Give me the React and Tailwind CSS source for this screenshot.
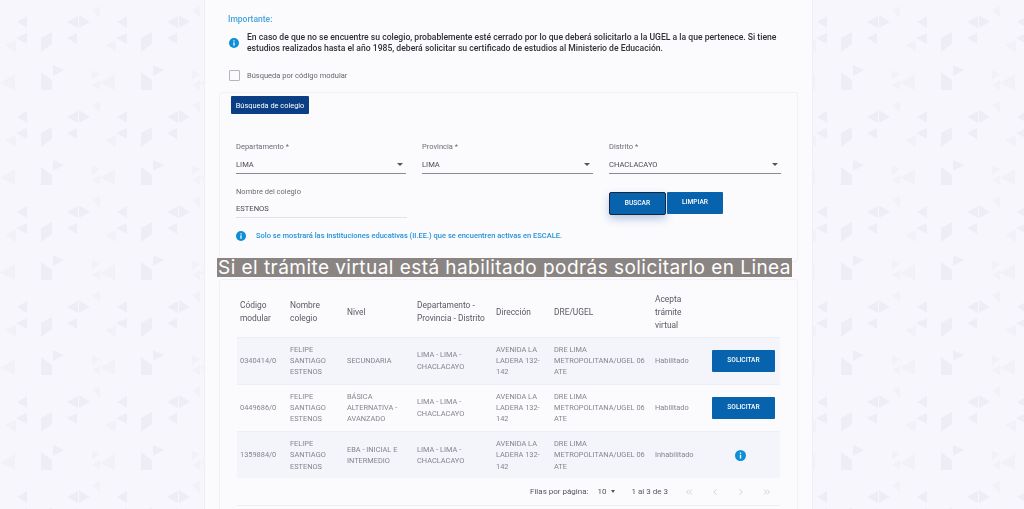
import { ChevronLeft, ChevronRight, ChevronsLeft, ChevronsRight } from "lucide-react";

const rows = [
  {
    codigo: "0340414/0",
    nivel: ["SECUNDARIA"],
    estado: "Habilitado",
    shaded: true,
  },
  {
    codigo: "0449686/0",
    nivel: ["BÁSICA", "ALTERNATIVA -", "AVANZADO"],
    estado: "Habilitado",
    shaded: false,
  },
  {
    codigo: "1359884/0",
    nivel: ["EBA - INICIAL E", "INTERMEDIO"],
    estado: "Inhabilitado",
    shaded: true,
  },
];

function Lines({ items }) {
  return items.map((t) => (
    <span key={t} className="block whitespace-nowrap">
      {t}
    </span>
  ));
}

function InfoDot({ className }) {
  return (
    <svg viewBox="0 0 24 24" className={className}>
      <circle cx="12" cy="12" r="12" fill="#0d8fd8" />
      <rect x="10.5" y="10.5" width="3" height="8" fill="#fff" />
      <rect x="10.5" y="5.5" width="3" height="3" fill="#fff" />
    </svg>
  );
}

function Pattern() {
  return (
    <svg className="absolute inset-0 w-full h-full blur-[0.6px]" aria-hidden="true">
      <defs>
        <pattern id="tri" width="100" height="95" patternUnits="userSpaceOnUse">
          <g fill="#eeedf5">
            <path d="M17 22 27 16V28Z" />
            <path d="M67 22 78 16V28Z" />
            <path d="M79 15 90 22 79 28Z" />
            <path d="M16 38 27 33V44Z" />
            <path d="M41 38 52 32V44L41 52Z" />
            <path d="M67 38 77 33V44Z" />
            <path d="M41 72 52 80V90L41 90Z" />
            <path d="M53 65 64 70 53 76Z" />
          </g>
          <g fill="#f1f1f8">
            <path d="M0 83 15 74V90Z" />
            <path d="M92 85 100 80V90Z" />
            <path d="M92 10 100 6V18Z" />
            <path d="M5 45 16 40V52Z" />
            <path d="M92 70 100 74 92 80Z" />
          </g>
        </pattern>
      </defs>
      <rect width="100%" height="100%" fill="url(#tri)" />
    </svg>
  );
}

function SelectField({ label, value, className }) {
  return (
    <div className={className}>
      <p className="text-[7.5px] leading-[10px] text-[#6b6b74]">{label}</p>
      <div className="mt-[5px] h-[17px] pb-[1px] flex items-center justify-between border-b border-[#8a8a92] text-[7.6px] text-[#4b4b55] pr-[3px]">
        <span>{value}</span>
        <span className="w-0 h-0 border-x-[3.5px] border-x-transparent border-t-[3.5px] border-t-[#55555f]" />
      </div>
    </div>
  );
}

export default function App() {
  return (
    <div
      className="relative h-[509px] w-[1024px] overflow-hidden bg-[#f6f6fc] text-[#45454f]"
      style={{ fontFamily: "Roboto, sans-serif" }}
    >
      <Pattern />

      <div className="relative ml-[204px] w-[609px] h-[509px] overflow-hidden bg-[#fbfbfe] border-x border-[#efeff5] pt-[14px] blur-[0.4px]">
        {/* aviso */}
        <div className="pl-[24px]">
          <p className="-ml-px text-[8.5px] leading-[11px] font-medium text-[#45a5dc]">Importante:</p>
          <div className="mt-[7px] flex items-center">
            <InfoDot className="w-[10px] h-[10px] shrink-0" />
            <p className="ml-[8px] w-[540px] text-[8.6px] leading-[11px] font-medium text-[#2f2f38]">
              En caso de que no se encuentre su colegio, probablemente esté cerrado por lo que deberá solicitarlo a la UGEL a la que pertenece. Si tiene estudios realizados hasta el año 1985, deberá solicitar su certificado de estudios al Ministerio de Educación.
            </p>
          </div>
          <div className="mt-[16px] flex items-center">
            <span className="w-[11px] h-[11px] border border-[#b5b5bd] rounded-[1px]" />
            <span className="ml-[7px] text-[7.5px] text-[#65656e]">Búsqueda por código modular</span>
          </div>
        </div>

        {/* busqueda */}
        <div className="mt-[11px] ml-[14px] w-[579px] h-[170px] border border-[#f0f0f6] rounded-[3px] px-[16px]">
          <div className="-ml-[5px] mt-[3px] w-[78px] h-[18px] bg-[#0a3f86] rounded-[1px] flex items-center justify-center text-[7.4px] text-white">
            Búsqueda de colegio
          </div>
          <div className="mt-[28px] flex gap-[16px]">
            <SelectField label="Departamento *" value="LIMA" className="w-[170px]" />
            <SelectField label="Provincia *" value="LIMA" className="w-[171px]" />
            <SelectField label="Distrito *" value="CHACLACAYO" className="w-[172px]" />
          </div>
          <div className="mt-[13px] flex items-start">
            <div className="w-[171px]">
              <p className="text-[7.5px] leading-[10px] text-[#6b6b74]">Nombre del colegio</p>
              <div className="mt-[6px] h-[15px] border-b border-[#e2e2ea] text-[7.6px] leading-[12px] text-[#4b4b55]">
                ESTENOS
              </div>
            </div>
            <div className="ml-[202px] mt-[5px] flex">
              <button className="w-[57px] h-[23px] bg-[#0763ad] border border-[#17273a] rounded-[2px] text-[6.6px] font-medium text-white shadow-[0_4px_8px_rgba(30,80,170,0.3)]">
                BUSCAR
              </button>
              <button className="ml-[1px] w-[56px] h-[22px] bg-[#0763ad] rounded-[1px] text-[6.6px] font-medium text-white">
                LIMPIAR
              </button>
            </div>
          </div>
          <div className="mt-[12px] flex items-center">
            <InfoDot className="w-[10px] h-[10px]" />
            <span className="ml-[10px] text-[7.5px] font-medium text-[#2493d8]">
              Solo se mostrará las instituciones educativas (II.EE.) que se encuentren activas en ESCALE.
            </span>
          </div>
        </div>

        {/* resultados */}
        <div className="mt-[17px] ml-[14px] w-[579px] h-[260px] border border-[#f0f0f6] rounded-[3px] px-[17px] pt-[7px]">
          <table className="w-[543px] table-fixed border-collapse text-left">
            <colgroup>
              <col className="w-[50px]" />
              <col className="w-[57px]" />
              <col className="w-[70px]" />
              <col className="w-[79px]" />
              <col className="w-[58px]" />
              <col className="w-[101px]" />
              <col className="w-[53px]" />
              <col className="w-[75px]" />
            </colgroup>
            <thead>
              <tr className="h-[50px] text-[8.4px] leading-[13px] text-[#5a5a64]">
                <th className="pl-[3px] font-normal">Código<br />modular</th>
                <th className="pl-[3px] font-normal">Nombre<br />colegio</th>
                <th className="pl-[3px] font-normal">Nivel</th>
                <th className="pl-[3px] font-normal whitespace-nowrap">Departamento -<br />Provincia - Distrito</th>
                <th className="pl-[3px] font-normal">Dirección</th>
                <th className="pl-[3px] font-normal">DRE/UGEL</th>
                <th className="pl-[3px] font-normal">Acepta<br />trámite<br />virtual</th>
                <th />
              </tr>
            </thead>
            <tbody>
              {rows.map((r) => (
                <tr
                  key={r.codigo}
                  className={`h-[47px] text-[7.4px] leading-[11.4px] text-[#85858f] border-t border-[#eeeef4] ${r.shaded ? "bg-[#f4f5fa]" : ""}`}
                >
                  <td className="pl-[3px]">{r.codigo}</td>
                  <td className="pl-[3px]"><Lines items={["FELIPE", "SANTIAGO", "ESTENOS"]} /></td>
                  <td className="pl-[3px]"><Lines items={r.nivel} /></td>
                  <td className="pl-[3px]"><Lines items={["LIMA - LIMA -", "CHACLACAYO"]} /></td>
                  <td className="pl-[3px]"><Lines items={["AVENIDA LA", "LADERA 132-", "142"]} /></td>
                  <td className="pl-[3px]"><Lines items={["DRE LIMA", "METROPOLITANA/UGEL 06", "ATE"]} /></td>
                  <td className="pl-[3px]">{r.estado}</td>
                  <td className="text-center">
                    {r.estado === "Habilitado" ? (
                      <button className="ml-[7px] block w-[63px] h-[22px] bg-[#0763ad] rounded-[1px] text-[6.6px] font-medium text-white">
                        SOLICITAR
                      </button>
                    ) : (
                      <InfoDot className="inline-block w-[11px] h-[11px] -ml-[4px]" />
                    )}
                  </td>
                </tr>
              ))}
            </tbody>
          </table>

          <div className="w-[543px] h-[27px] flex items-center text-[8px] text-[#55555f] pl-[293px] whitespace-nowrap">
            <span>Filas por página:</span>
            <span className="ml-[9px]">10</span>
            <span className="ml-[4px] w-0 h-0 border-x-[2.5px] border-x-transparent border-t-[3px] border-t-[#55555f]" />
            <span className="ml-[17px]">1 al 3 de 3</span>
            <div className="ml-[16px] flex gap-[16px] text-[#b5b5bd]">
              <ChevronsLeft size={10} strokeWidth={1.5} />
              <ChevronLeft size={10} strokeWidth={1.5} />
              <ChevronRight size={10} strokeWidth={1.5} />
              <ChevronsRight size={10} strokeWidth={1.5} />
            </div>
          </div>
          <div className="w-[543px] border-t border-[#eeeef4]" />
        </div>
      </div>

      {/* subtitulo sobre el video */}
      <div
        className="absolute left-[217px] top-[258px] w-[575px] h-[19px] bg-[#8a8583] text-white text-[19px] leading-[19px] whitespace-nowrap text-center tracking-[0.45px]"
        style={{ fontFamily: "Inter, sans-serif" }}
      >
        Si el trámite virtual está habilitado podrás solicitarlo en Linea
      </div>
    </div>
  );
}
